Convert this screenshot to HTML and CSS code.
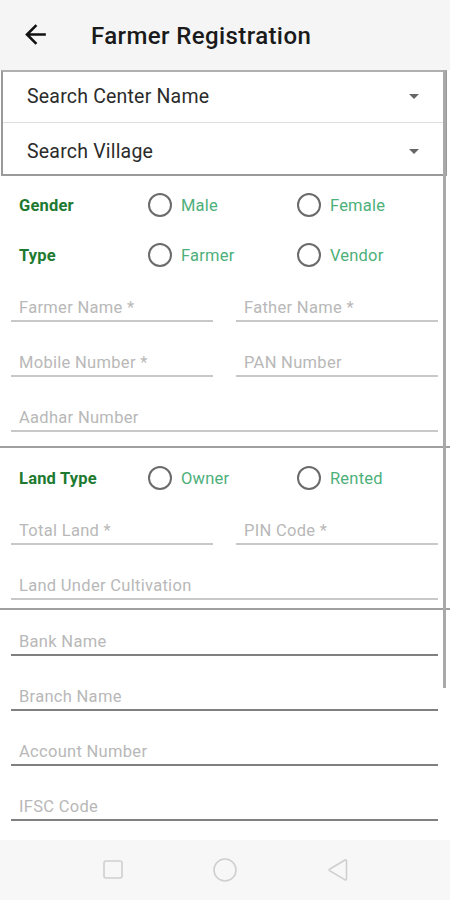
FILE: index.html
```html
<!DOCTYPE html>
<html lang="en">
<head>
    <meta charset="UTF-8">
    <meta name="viewport" content="width=device-width, initial-scale=1.0">
    <title>Farmer Registration</title>
    <link rel="stylesheet" href="styles.css">
</head>
<body>
    <div class="screen">
        <!-- App bar -->
        <header class="app-bar">
            <button class="back-button" aria-label="Back">
                <svg width="31" height="31" viewBox="0 0 24 24"><path d="M20 11H7.83l5.59-5.59L12 4l-8 8 8 8 1.41-1.41L7.83 13H20v-2z" fill="#111"/></svg>
            </button>
            <h1 class="app-title">Farmer Registration</h1>
        </header>

        <main class="content">
            <!-- Search dropdowns -->
            <div class="dropdowns">
                <div class="dropdown">
                    <span>Search Center Name</span>
                    <span class="caret"></span>
                </div>
                <div class="dropdown">
                    <span>Search Village</span>
                    <span class="caret"></span>
                </div>
            </div>

            <!-- Personal details -->
            <section class="form-section personal">
                <div class="radio-row">
                    <span class="radio-label">Gender</span>
                    <label class="radio-option"><span class="radio-circle"></span>Male</label>
                    <label class="radio-option"><span class="radio-circle"></span>Female</label>
                </div>
                <div class="radio-row">
                    <span class="radio-label">Type</span>
                    <label class="radio-option"><span class="radio-circle"></span>Farmer</label>
                    <label class="radio-option"><span class="radio-circle"></span>Vendor</label>
                </div>
                <div class="field-grid">
                    <div class="field"><input class="field-input" placeholder="Farmer Name *"></div>
                    <div class="field"><input class="field-input" placeholder="Father Name *"></div>
                    <div class="field"><input class="field-input" placeholder="Mobile Number *"></div>
                    <div class="field"><input class="field-input" placeholder="PAN Number"></div>
                    <div class="field wide"><input class="field-input" placeholder="Aadhar Number"></div>
                </div>
            </section>

            <!-- Land details -->
            <section class="form-section land">
                <div class="radio-row">
                    <span class="radio-label">Land Type</span>
                    <label class="radio-option"><span class="radio-circle"></span>Owner</label>
                    <label class="radio-option"><span class="radio-circle"></span>Rented</label>
                </div>
                <div class="field-grid">
                    <div class="field"><input class="field-input" placeholder="Total Land *"></div>
                    <div class="field"><input class="field-input" placeholder="PIN Code *"></div>
                    <div class="field wide"><input class="field-input" placeholder="Land Under Cultivation"></div>
                </div>
            </section>

            <!-- Bank details -->
            <section class="form-section bank">
                <div class="field-grid">
                    <div class="field wide"><input class="field-input" placeholder="Bank Name"></div>
                    <div class="field wide"><input class="field-input" placeholder="Branch Name"></div>
                    <div class="field wide"><input class="field-input" placeholder="Account Number"></div>
                    <div class="field wide"><input class="field-input" placeholder="IFSC Code"></div>
                </div>
            </section>

            <div class="scrollbar"></div>
        </main>

        <!-- System navigation -->
        <nav class="nav-bar">
            <svg width="22" height="22" viewBox="0 0 22 22"><rect x="2" y="2" width="18" height="17" rx="2" fill="none" stroke="#cfcfcf" stroke-width="1.6"/></svg>
            <svg width="26" height="26" viewBox="0 0 26 26"><circle cx="13" cy="13" r="11" fill="none" stroke="#cfcfcf" stroke-width="1.6"/></svg>
            <svg width="24" height="24" viewBox="0 0 24 24"><path d="M20.5 2.5v18.5a1 1 0 0 1-1.4.9L3.5 12.6a0.8 0.8 0 0 1 0-1.3L19.1 2a1 1 0 0 1 1.4.5z" fill="none" stroke="#cfcfcf" stroke-width="1.6" stroke-linejoin="round"/></svg>
        </nav>
    </div>
</body>
</html>
```

FILE: styles.css
```css
/* Reset */
* {
    margin: 0;
    padding: 0;
    box-sizing: border-box;
}

body {
    font-family: Roboto, 'Noto Sans', sans-serif;
    color: #222;
    background-color: #fff;
}

.screen {
    width: 450px;
    height: 900px;
    display: flex;
    flex-direction: column;
    overflow: hidden;
}

/* App bar */
.app-bar {
    height: 70px;
    flex-shrink: 0;
    display: flex;
    align-items: center;
    background-color: #f5f5f5;
}

.back-button {
    display: flex;
    margin-left: 20px;
    margin-top: -2px;
    border: none;
    background: none;
}

.app-title {
    margin-left: 40px;
    margin-top: 2px;
    font-size: 24px;
    font-weight: 500;
    color: #1a1a1a;
    letter-spacing: 0.4px;
}

/* Scrolling content */
.content {
    position: relative;
    flex: 1;
    overflow: hidden;
}

.scrollbar {
    position: absolute;
    top: 0;
    right: 4px;
    width: 3px;
    height: 618px;
    background-color: #a9a9a9;
}

/* Dropdowns */
.dropdowns {
    margin: 0 3px 0 1px;
    border: 2px solid #9a9a9a;
    border-top-color: #b0b0b0;
}

.dropdown {
    height: 50px;
    display: flex;
    align-items: center;
    justify-content: space-between;
    padding: 0 26px 1px 24px;
    font-size: 19.5px;
    letter-spacing: 0.2px;
    color: #2b2b2b;
}

.dropdown + .dropdown {
    height: 52px;
    padding-top: 6px;
    padding-bottom: 0;
    border-top: 1px solid #e0e0e0;
}

.caret {
    width: 0;
    height: 0;
    border-left: 5px solid transparent;
    border-right: 5px solid transparent;
    border-top: 5px solid #666;
}

/* Form sections */
.form-section {
    padding: 0 12px 0 11px;
}

.personal {
    padding-top: 4px;
    padding-bottom: 14px;
    border-bottom: 2px solid #a0a0a0;
}

.land {
    padding-top: 5px;
    padding-bottom: 8px;
    border-bottom: 2px solid #a0a0a0;
}

.bank {
    padding-top: 4px;
}

/* Radio groups */
.radio-row {
    height: 50px;
    display: grid;
    grid-template-columns: 129px 149px 1fr;
    align-items: center;
    padding-left: 8px;
}

.radio-label {
    font-size: 16.5px;
    font-weight: 700;
    letter-spacing: 0.2px;
    color: #1d7a30;
}

.radio-option {
    display: flex;
    align-items: center;
    gap: 9px;
    font-size: 16.5px;
    letter-spacing: 0.2px;
    color: #4cb07a;
}

.radio-circle {
    width: 24px;
    height: 24px;
    border: 2px solid #6b6b6b;
    border-radius: 50%;
}

/* Text fields */
.field-grid {
    display: grid;
    grid-template-columns: 1fr 1fr;
    column-gap: 23px;
    row-gap: 13px;
}

.field {
    height: 42px;
    display: flex;
    align-items: flex-end;
}

.field.wide {
    grid-column: span 2;
}

.field-input {
    width: 100%;
    padding: 0 8px 2px;
    border: none;
    border-bottom: 2px solid #c8c8c8;
    font-family: inherit;
    font-size: 16.5px;
    letter-spacing: 0.3px;
    line-height: 20px;
    background: none;
    outline: none;
}

.field-input::placeholder {
    color: #b8b8b8;
}

.bank .field-input {
    border-bottom-color: #808080;
}

/* Navigation bar */
.nav-bar {
    height: 60px;
    flex-shrink: 0;
    display: flex;
    align-items: center;
    justify-content: space-between;
    padding: 0 100px 0 102px;
    background-color: #f7f7f7;
}
```
